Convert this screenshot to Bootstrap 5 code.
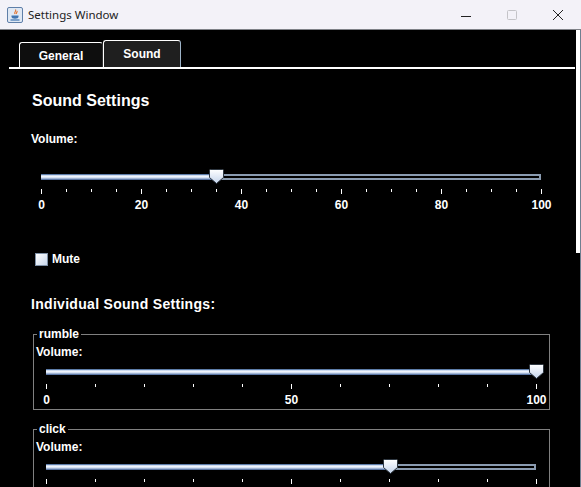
<!DOCTYPE html>
<html lang="en">
<head>
<meta charset="utf-8">
<title>Settings Window</title>
<link href="https://cdn.jsdelivr.net/npm/bootstrap@5.3.0/dist/css/bootstrap.min.css" rel="stylesheet">
<style>
html,body{height:487px;overflow:hidden;background:#000;}
body{font-family:"Liberation Sans",Arial,sans-serif;font-size:12px;font-weight:700;color:#fff;line-height:14px;}
.win-bar{height:30px;background:#f3f2f8;border-bottom:1px solid #7f8288;color:#222;padding-left:7px;}
.win-title{font-family:"Noto Sans",sans-serif;font-weight:400;font-size:11.5px;margin-left:5px;}
.win-controls{margin-left:auto;}
.win-btn{width:46px;height:29px;}
.win-body{height:457px;overflow:hidden;}
.win-scroll{width:5px;border-right:1px solid #6f7f90;flex:none;}
.win-thumb{height:223px;background:#fff;}
.win-main{flex:1;min-width:0;overflow:hidden;}
.tab-line{margin:11px 1px 0 9px;padding-left:10px;height:28px;border-bottom:2px solid #fff;align-items:flex-end;flex-wrap:nowrap;}
.tab-item{display:block;border:1px solid #fff;border-bottom:0;border-radius:3px 3px 0 0;background:#0e0e0e;color:#fff;text-align:center;text-decoration:none;}
.tab-gen{width:84px;height:25px;padding-top:6px;border-right-color:#333;}
.tab-snd{width:78px;height:27px;padding-top:6px;background:#1f1f1f;border-right-color:#9db3c8;}
.snd-h1{font-size:16px;font-weight:700;line-height:18px;margin:23px 0 0 32px;}
.vol-main{margin:22px 0 0 31px;}
.slide-main{margin:0 0 0 41px;width:500px;padding-top:28px;}
.slide-sub{margin:0 0 0 10px;width:490px;}
.rail{position:relative;height:6px;box-shadow:inset 0 0 0 2px #8a9bb0;background:#000;}
.rail-fill{height:6px;background:linear-gradient(#5d7ca8 0,#5d7ca8 16%,#b9cce8 17%,#f2f6fd 40%,#c6d6ee 70%,#5d78a6 84%,#5d78a6 100%);}
.thumb-svg{position:absolute;top:-5px;width:15px;height:15px;margin-left:-7px;display:block;}
.ticks{margin-top:9px;margin-right:-1px;height:5px;align-items:flex-start;}
.tk{width:1px;height:3px;background:#fff;}
.tk-major{height:5px;}
.nums{margin-top:4px;margin-right:-1px;height:14px;justify-content:space-between;}
.num{width:1px;display:flex;justify-content:center;white-space:nowrap;}
.mute-row{margin:40px 0 0 35px;height:14px;}
.mute-box{width:13px;height:13px;border:1px solid #7d8fa5;background:linear-gradient(135deg,#fff,#c8d6ea);margin-right:4px;}
.ind-h2{font-size:14px;line-height:16px;letter-spacing:.3px;margin:30px 0 0 31px;}
.sound-set{margin:15px 0 0 33px;width:517px;height:83px;border:1px solid #808080;padding:0 0 0 2px;min-width:0;}
.sound-set + .sound-set{margin-top:12px;}
.sound-leg{float:none;width:auto;font-size:12px;font-weight:700;line-height:14px;margin:0 0 0 1px;padding:0 2px;}
.sound-vol{margin-top:4px;margin-bottom:10px;}
</style>
</head>
<body>
<div class="win-bar d-flex align-items-center">
  <svg width="16" height="16" viewBox="0 0 16 16"><rect x=".5" y=".5" width="15" height="15" rx="1.5" fill="#dfe8f4" stroke="#5f7fa8"/><path d="M8.5 2.5c1.5 1.5-2 2.5-.5 4.5M10 4c.8 1-1.3 1.6-.6 3" fill="none" stroke="#e2702a" stroke-width="1.1"/><path d="M4.5 8.5h7v1c0 1.5-1.5 2.2-3.500 2.200s-3.500-.7-3.500-2.200z" fill="#3f74b0"/><path d="M3.500 13h9" stroke="#3f74b0" stroke-width="1.200"/></svg>
  <span class="win-title">Settings Window</span>
  <div class="win-controls d-flex">
    <div class="win-btn d-flex align-items-center justify-content-center"><svg width="10" height="10" viewBox="0 0 10 10"><path d="M0 6.500h10" stroke="#222"/></svg></div>
    <div class="win-btn d-flex align-items-center justify-content-center"><svg width="10" height="10" viewBox="0 0 10 10"><rect x=".5" y=".5" width="9" height="9" rx="1" fill="none" stroke="#c4c4c8"/></svg></div>
    <div class="win-btn d-flex align-items-center justify-content-center"><svg width="12" height="12" viewBox="0 0 12 12"><path d="M1 1l10 10M11 1L1 11" stroke="#222"/></svg></div>
  </div>
</div>
<svg width="0" height="0" class="position-absolute"><defs><linearGradient id="tg" x1="0" y1="0" x2="0" y2="1"><stop offset="0" stop-color="#fff"/><stop offset="1" stop-color="#c4d4ec"/></linearGradient>
<symbol id="thumb" viewBox="0 0 15 15"><path d="M.5 1.500a1 1 0 0 1 1-1h12a1 1 0 0 1 1 1v7l-7 6-7-6z" fill="url(#tg)" stroke="#2d3640"/></symbol></defs></svg>
<div class="win-body d-flex">
  <div class="win-main">
    <ul class="nav tab-line">
      <li><a class="tab-item tab-gen" href="#">General</a></li>
      <li><a class="tab-item tab-snd" href="#">Sound</a></li>
    </ul>
    <div class="snd-h1">Sound Settings</div>
    <div class="vol-main">Volume:</div>
    <div class="slide-main">
      <div class="rail"><div class="rail-fill" style="width:35%"></div><svg class="thumb-svg" style="left:35%"><use href="#thumb"/></svg></div>
      <div class="ticks d-flex justify-content-between" id="t1"></div>
      <div class="nums d-flex"><span class="num">0</span><span class="num">20</span><span class="num">40</span><span class="num">60</span><span class="num">80</span><span class="num">100</span></div>
    </div>
    <div class="mute-row d-flex align-items-center"><span class="mute-box"></span><span>Mute</span></div>
    <div class="ind-h2">Individual Sound Settings:</div>
    <fieldset class="sound-set">
      <legend class="sound-leg">rumble</legend>
      <div class="sound-vol">Volume:</div>
      <div class="slide-sub">
        <div class="rail"><div class="rail-fill" style="width:100%"></div><svg class="thumb-svg" style="left:100%"><use href="#thumb"/></svg></div>
        <div class="ticks d-flex justify-content-between" id="t2"></div>
        <div class="nums d-flex"><span class="num">0</span><span class="num">50</span><span class="num">100</span></div>
      </div>
    </fieldset>
    <fieldset class="sound-set">
      <legend class="sound-leg">click</legend>
      <div class="sound-vol">Volume:</div>
      <div class="slide-sub">
        <div class="rail"><div class="rail-fill" style="width:70.2%"></div><svg class="thumb-svg" style="left:70.2%"><use href="#thumb"/></svg></div>
        <div class="ticks d-flex justify-content-between" id="t3"></div>
      </div>
    </fieldset>
  </div>
  <div class="win-scroll"><div class="win-thumb"></div></div>
</div>
<script>
function tk(id,n,m){var h='';for(var i=0;i<=n;i++){h+='<span class="tk'+(i%m==0?' tk-major':'')+'"></span>';}document.getElementById(id).innerHTML=h;}
tk('t1',20,4);tk('t2',10,5);tk('t3',10,5);
</script>
<script src="https://cdn.jsdelivr.net/npm/bootstrap@5.3.0/dist/js/bootstrap.bundle.min.js"></script>
</body>
</html>
